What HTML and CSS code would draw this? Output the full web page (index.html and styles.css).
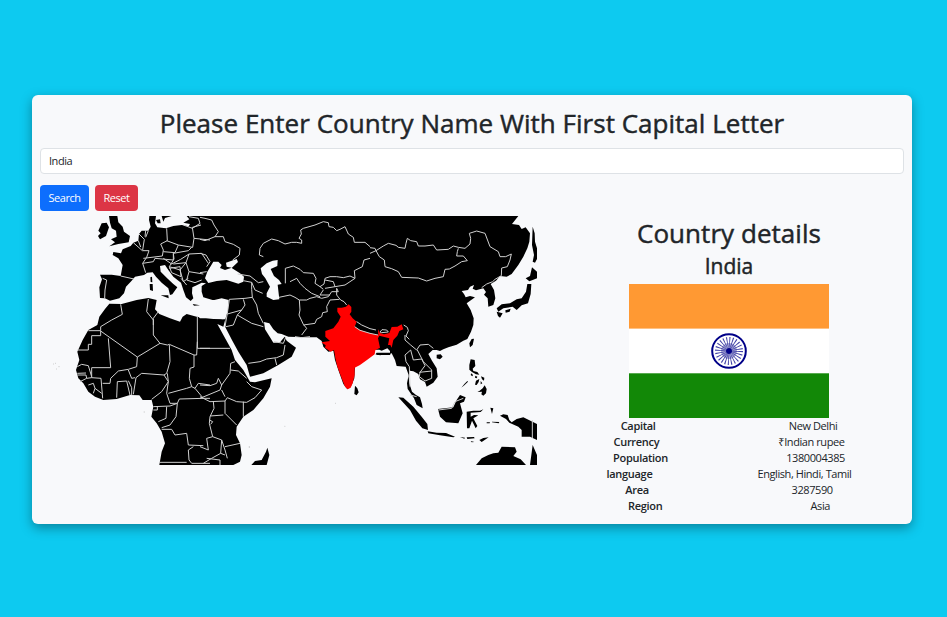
FILE: index.html
```
<!DOCTYPE html>
<html lang="en">
<head>
<meta charset="utf-8">
<title>Country details</title>
<link rel="stylesheet" href="styles.css">
</head>
<body>
<main class="card">
  <h1 class="title">Please Enter Country Name With First Capital Letter</h1>
  <input class="field" type="text" value="India">
  <div class="actions">
    <button class="btn btn-search">Search</button>
    <button class="btn btn-reset">Reset</button>
  </div>
  <div class="content">
    <svg class="map" viewBox="0 18 1491 747" preserveAspectRatio="none">
      <g class="land">
        <!-- Eurasia -->
        <path d="M440 18H1435L1416 42 1437 45 1445 57 1457 52 1470 70 1468 95 1462 115 1450 140 1435 165 1415 192 1400 200 1380 198 1368 212 1352 222 1362 240 1366 265 1360 285 1345 290 1343 265 1332 254 1338 246 1330 235 1308 241 1298 236 1302 225 1290 230 1284 240 1265 243 1272 252 1277 262 1290 258 1305 262 1280 280 1292 300 1301 325 1300 345 1293 365 1282 387 1270 392 1250 404 1225 412 1210 418 1200 423 1190 420 1178 420 1165 432 1176 452 1190 475 1193 500 1180 518 1160 530 1155 516 1140 508 1135 492 1120 484 1110 482 1106 500 1108 520 1116 545 1128 555 1140 562 1146 582 1148 595 1130 585 1122 565 1103 537 1101 520 1106 495 1097 470 1070 468 1065 450 1055 430 1020 436 1000 430 982 438 965 455 945 470 943 505 935 525 922 538 910 522 895 480 885 450 880 422 865 425 850 410 845 393 830 382 800 382 745 380 725 372 713 370 700 358 688 340 672 336 675 358 690 382 700 398 720 397 734 380 740 392 768 413 755 440 715 465 670 490 630 500 620 465 595 425 577 392 556 352 556 328 564 300 566 270 545 265 520 271 505 266 490 262 485 245 485 228 498 220 485 218 470 226 457 232 456 250 460 265 452 273 438 262 430 240 423 218 400 200 385 180 375 165 360 168 362 185 380 203 400 222 412 232 406 240 397 253 390 255 385 235 365 218 348 200 338 187 322 188 312 195 285 200 275 212 258 230 252 250 238 265 210 272 195 265 180 264 178 232 186 208 180 194 215 194 242 198 248 165 235 145 218 135 220 126 243 130 248 118 272 108 280 98 295 92 297 72 305 62 325 62 332 50 327 30 328 18H348L345 40 352 52 378 55 400 48 425 45 446 49 450 42 430 38 448 28Z"/>
        <!-- Africa -->
        <path d="M556 328 520 327 470 320 440 312 428 320 420 335 390 325 358 312 345 298 350 270 325 264 290 270 245 282 208 281 195 297 178 320 172 345 145 360 128 390 112 425 118 450 108 480 115 505 130 520 145 545 165 560 190 570 230 567 270 555 298 556 308 570 335 570 340 590 334 620 350 640 365 665 375 700 365 725 358 765H580L600 755 605 735 600 700 588 675 590 650 610 620 640 600 670 565 690 530 695 505 645 517 630 515 610 480 585 450 575 420 550 375 532 342 550 350Z"/>
        <!-- Islands -->
        <path d="M207 18H232L235 37 248 50 252 65 270 78 266 97 235 102 208 109 225 97 213 88 230 80 228 62 215 55 210 38ZM185 40 200 38 207 52 198 78 180 88 174 78 182 70 175 62ZM362 256 385 256 386 265ZM329 222H338L339 243 330 240ZM331 202 336 200 337 217 332 216ZM348 30 360 28 362 40 353 40ZM365 18H395L375 24 370 35ZM458 282 480 286 462 287Z"/>
        <path d="M1478 50 1484 70 1485 95 1491 115V147L1485 158 1478 155 1482 135 1476 105ZM1476 172 1491 185V205L1478 210 1468 214 1457 205 1470 198ZM1462 222 1474 222 1472 252 1464 280 1445 286 1430 300 1418 290 1390 295 1375 305 1370 295 1385 283 1410 280 1430 268 1445 265 1458 245ZM1370 305 1388 310 1380 323 1374 318ZM1396 301 1412 296 1409 305 1397 308ZM1295 387 1302 386 1298 405 1290 412 1288 400ZM1190 434 1202 433 1208 440 1200 448 1190 445ZM945 527 952 535 956 547 950 556 943 552Z"/>
        <path d="M1075 562 1090 563 1120 590 1145 620 1162 642 1164 660 1147 655 1128 632 1110 600ZM1163 664 1190 668 1218 669 1245 680 1240 682 1200 676 1165 670ZM1194 597 1240 592 1250 570 1260 555 1277 562 1272 575 1260 580 1268 610 1255 640 1218 637 1200 620ZM1280 605 1300 602 1320 602 1330 598 1322 606 1292 608 1292 620 1302 615 1315 616 1300 625 1312 648 1307 655 1296 632 1288 655 1281 655ZM1351 593 1360 595 1356 612ZM1380 617 1390 613 1403 615 1408 630 1415 637 1430 627 1450 622 1491 642V690L1470 680 1445 680 1445 660 1435 650 1408 638 1398 627ZM1308 765 1325 745 1345 735 1360 730 1375 728 1385 710 1425 712 1430 725 1420 738 1442 748 1458 765ZM1478 705 1491 735V765H1470ZM1318 690 1330 684 1346 682 1325 696ZM1260 681 1275 683 1273 686ZM1280 682 1302 681 1304 685 1282 687ZM1292 693 1303 696 1295 697ZM1340 637 1350 637 1349 640 1340 640ZM1356 635 1378 636 1376 640 1356 637Z"/>
        <!-- Philippines -->
        <path transform="translate(1230 375)" d="M62 73 74 75 76 93 68 101 70 108 82 111 88 119 78 118 66 111 58 104 58 90ZM64 115 69 120 67 124 62 120ZM76 122 82 125 80 130 75 128ZM93 124 103 128 102 137 96 133ZM78 137 88 132 86 141 80 150 75 149ZM92 138 97 145 92 148ZM88 168 98 160 104 151 110 162 108 175 100 182 94 178 96 170 82 171ZM34 158 43 147 52 138 54 140 43 151Z"/>
        <path d="M634 765 645 753 665 750 678 725 682 713 688 735 680 765Z"/>
      </g>
      <g class="sea">
        <path d="M495 205 502 185 520 155 535 155 545 165 540 174 555 180 575 173 560 170 558 158 590 147 594 156 575 174 600 190 612 200 610 215 595 221 560 210 530 213 505 219Z"/>
        <path d="M662 175 680 160 698 152 713 150 712 168 692 177 702 198 717 210 725 222 713 224 718 268 700 270 680 260 680 250 690 230 676 205 666 192Z"/>
        <path d="M488 270 505 270 555 270 562 290 550 328 520 325 480 325 470 315 485 295ZM695 385 702 397 720 396 732 378 728 376 720 390Z"/>
      </g>
      <!-- India -->
      <g transform="translate(810 255)">
        <path class="notch" d="M196 162V174L203 177H238L240 170"/>
        <path class="notch-fill" d="M186 183V164H208L215 167 232 160 240 168 240 173H200L192 183Z"/>
        <path class="selected" d="M82 38 95 38 108 35 116 28 124 36 124 50 119 58 128 70 140 80 134 95 150 105 180 115 205 120 204 103 210 114 222 118 238 114 245 96 262 95 275 88 280 103 268 108 262 122 250 135 245 158 241 150 234 150 238 130 208 122 204 130 210 158 196 166 194 178 175 192 150 210 134 218 134 240 128 265 122 278 113 283 105 275 95 250 82 215 76 190 72 165 62 170 45 158 47 151 34 142 60 138 46 125 46 108 70 100 85 80 92 65 82 50Z"/>
      </g>
      <!-- Europe -->
      <g class="borders">
        <path d="M188 205 200 210 195 240 194 264M242 198 282 207M280 98 307 122 327 122 320 142 308 160 317 188M295 92 302 111M297 72 313 88 308 120M317 62 315 80M325 62 317 82M380 55 382 92 362 102 370 120 367 138 310 145M380 92 415 105 405 128 370 125M415 105 458 112 462 85 457 52M308 160 340 155 345 145 400 150 400 130 445 122 455 112M370 145 395 162 422 148 447 132M400 130 402 147 388 170 420 180 438 158 400 162M438 158 447 132 485 130 505 160M438 158 447 185 490 192M447 185 440 210 465 218 485 210M388 175 420 170 423 200 395 188 388 170M420 180 430 215 445 205M423 205 440 225M447 20 475 25 480 40 457 55 430 45M462 85 510 90M457 52 483 45"/>
      </g>
      <!-- Black Sea, Caucasus, Central Asia -->
      <g class="borders" transform="translate(480)">
        <path d="M0 22 15 25 35 30 42 45 55 65 45 80 15 92 0 88M45 80 70 80 75 95 100 103 120 115 118 135 98 150M0 130 18 135 30 155 20 170M0 188 20 185M113 192 150 198 175 218 190 215M130 212 155 217 165 240 188 250M155 217 155 238 157 262 135 265 88 268M157 262 170 285 175 310 190 340M88 268 82 310 75 350M130 268 135 285 125 300 82 312M125 300 112 315 155 340 190 350M78 350 100 345 112 315M190 140 178 135 180 115 190 100 215 87 235 92 255 102 275 97 290 97 305 100 305 90 297 85 304 72 302 60 310 55 345 45 370 35 385 38 387 50 400 52 410 62 420 58 435 50 445 72 460 82 463 97 495 97 510 110M510 145 492 150 487 170 463 182 465 205 450 198 430 203 410 200 390 200 375 205 372 222 360 230M375 210 400 215 405 230 375 235M405 230 435 225 465 205M256 220V175L280 168 300 178 310 188 340 190 348 205 345 220 360 230 370 238M270 215 290 205 300 220 315 235 335 250 360 260M237 262 270 255 285 262 298 270 320 270 330 265 350 260 365 265 385 260 395 245 415 245 410 235 410 255 422 270 432 275 440 285M298 270 300 300 297 315 310 343 320 355 305 375M310 345 345 340 350 328 365 320 368 308 382 305 380 290 390 270 418 268M370 240 360 255 390 255"/>
      </g>
      <!-- Mongolia, Manchuria, Himalaya -->
      <g class="borders" transform="translate(990)">
        <path d="M0 113 15 115 18 122 0 130M18 122 40 108 55 100 78 106 85 112 105 115 108 100 112 85 122 92 140 95 145 108 165 108 190 105 200 120 235 118 250 108 265 112 285 115 300 102 302 85 298 70 320 63 345 70 360 110 385 125 390 140 407 140 424 132 420 150 412 170 395 174 394 197 375 208 368 215 350 222 335 233M265 115 262 125 260 138 280 138 292 152 275 155 255 168 238 177 225 178 220 200 195 205 170 213 145 204 95 202 85 185 65 176 45 170 43 150 28 140 18 122M-40 335-25 345 0 356 18 360M-46 350-30 361 0 370 24 375M30 366 36 359 50 360 55 366 35 368ZM101 345 112 352 115 362 108 378 118 388"/>
      </g>
      <!-- West and North Africa -->
      <g class="borders" transform="translate(0 375)">
        <path d="M242-92 247-62 215-45 182-25V-13H145M182-12V2H155V28H145V45H112M182-12 292 66 290 95 265 103 235 108 212 130 210 145 188 145M205 10 212 98H155V128L183 130 188 190M325-108 320-70 340-45V-30M355-70 340-50V0L360 25 292 66M360 25 382 30 388 28 462 60V96L450 100 448 130 455 155 440 160 385 175M472-55V40H510M472 20 470 60 462 60M388 30 390 80 380 115 372 120 305 115 288 128 280 178M265 105 275 130 285 128M230 188 232 140 260 138 270 180M265 137 275 158V180M382 115 385 140 365 170 335 193M372 120 385 140 380 175 390 205 412 205 418 192 490 190M340 215 390 213 412 205 408 245 390 270 365 278M340 225H352V215M380 215 378 250 355 260M365 283H395L405 300 440 295 445 330 490 332M460 335 445 345 447 375 455 385 510 385M455 155 465 160 475 145 510 150M465 160 490 190 510 190M112 95 125 88 145 92 155 125M112 115 138 114M112 120 138 120 140 130 120 140M140 130 155 128M145 150 160 145 165 160 160 175M165 160 185 175M358 382H440"/>
      </g>
      <!-- East Africa and Arabia -->
      <g class="borders" transform="translate(480 375)">
        <path d="M0 40H90M0 150 30 152 50 145 55 130 65 150 60 165 0 190M65 150 90 115 92 85 105 80M92 105 115 108 140 130M75 185 65 165M0 185 30 200 75 198 82 188 110 200 140 202 165 188 185 165 155 155 140 140M130 200V245M40 200 42 220 30 245 28 265 38 305 65 315 75 345 82 370M75 198 75 235 110 270M30 243 70 240M28 255 38 260 32 268M38 305 20 310 25 345 0 335M65 315 62 355 35 370 10 385M75 335 120 325M145 85 180 80 200 72 230 68 250 60 255 30M225 70 230 90M222 20 250 25 258 5M20 370 60 375 60 390M285 5 305 8 330 5M62 355 75 360"/>
      </g>
      <!-- Indochina and islands -->
      <g class="borders" transform="translate(990 375)">
        <path d="M105 0 105 15 122 30 140 45 150 30 175 28 190 40M122 45 105 60 108 80 118 95 120 155M122 45 130 75 155 72 165 92 150 112 148 125 165 138 185 130 185 105 160 80 142 45M148 112 185 108M205 225 245 220 255 200 280 190M487 255V310M120 180 140 185"/>
      </g>
      <g class="specks"><path d="M39 462h3M45 460h3M55 470h4M48 477h3M311 606h4M885 580h3M628 708v6M733 649h3"/></g>
    </svg>
    <section class="details">
      <h2 class="details-title">Country details</h2>
      <h3 class="country">India</h3>
      <svg class="flag" viewBox="0 0 200 134">
        <rect width="200" height="134" fill="#fff"/>
        <rect width="200" height="44.6" fill="#f93"/>
        <rect y="89.3" width="200" height="44.7" fill="#128807"/>
        <g transform="translate(100 67)" fill="none" stroke="#000088">
          <circle r="16.8" stroke-width="2"/>
          <circle r="8" stroke-width="12" stroke-dasharray=".7 1.394" stroke-opacity=".75"/>
          <circle r="5.5" stroke-width="5" stroke-opacity=".35"/>
          <circle r="3" fill="#000088" stroke="none"/>
        </g>
      </svg>
      <div class="row"><b>Capital</b><span>New Delhi</span></div>
      <div class="row"><b>Currency</b><span>₹Indian rupee</span></div>
      <div class="row"><b>Population</b><span>1380004385</span></div>
      <div class="row"><b>language</b><span>English, Hindi, Tamil</span></div>
      <div class="row"><b>Area</b><span>3287590</span></div>
      <div class="row"><b>Region</b><span>Asia</span></div>
    </section>
  </div>
</main>
</body>
</html>
```
FILE: styles.css
```
* { box-sizing: border-box; }
body {
  margin: 0;
  min-height: 617px;
  padding: 95px 35px 0 32px;
  background: #0dcaf0;
  color: #212529;
  font-family: "Open Sans", "Noto Sans", sans-serif;
  font-size: 11px;
  line-height: 16px;
}
.card {
  width: 880px;
  height: 429px;
  padding: 12px 8px 0;
  border-radius: 6px;
  background: #f8f9fb;
  box-shadow: 0 4px 12px rgba(0, 0, 0, .35);
}
h1, h2, h3 {
  margin: 0;
  font-weight: 500;
  text-align: center;
  -webkit-text-stroke: .45px #212529;
}
.title { font-size: 26px; line-height: 32px; letter-spacing: .02px; }
.field {
  display: block;
  width: 864px;
  height: 26px;
  margin-top: 9px;
  padding: 0 8px 1px;
  border: 1px solid #dee2e6;
  border-radius: 4px;
  background: #fff;
  color: #212529;
  font: inherit;
  letter-spacing: -.45px;
}
.actions { display: flex; gap: 6px; margin-top: 11px; }
.btn {
  height: 26px;
  padding: 0;
  border: 0;
  border-radius: 4px;
  color: #fff;
  font: inherit;
  letter-spacing: -.45px;
}
.btn-search { width: 49px; background: #0d6efd; }
.btn-reset { width: 43px; background: #dc3545; }
.content { display: flex; gap: 17px; margin-top: 5px; }
.map { display: block; width: 497px; height: 249px; }
.land { fill: #000; }
.sea, .notch-fill { fill: #f8f9fb; }
.selected { fill: #f00; }
.notch { fill: none; stroke: #000; stroke-width: 6; }
.borders { fill: none; stroke: #d0d0d0; stroke-width: 3; stroke-linejoin: round; }
.specks { stroke: #bbb; stroke-width: 2; }
.details { width: 350px; padding-top: 1px; }
.details-title { font-size: 26px; line-height: 32px; letter-spacing: .05px; }
.country { font-size: 21px; line-height: 26px; margin-top: 4px; }
.flag { display: block; width: 200px; height: 134px; margin: 5px auto 0; }
.row { display: flex; justify-content: space-around; letter-spacing: -.42px; }
.row b { font-weight: 600; letter-spacing: -.3px; }
```
